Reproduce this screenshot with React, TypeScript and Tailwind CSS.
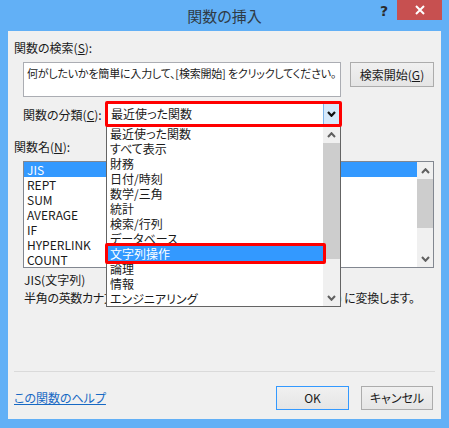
import React from "react";

const FONT = "font-['Noto_Sans_CJK_JP','Noto_Sans',sans-serif] [font-feature-settings:'palt']";

function Chev({ up = false, color = "#606060", w = 9, h = 6, sw = 2 }: { up?: boolean; color?: string; w?: number; h?: number; sw?: number }) {
  return (
    <svg width={w} height={h} viewBox={`0 0 ${w} ${h}`}>
      <path
        d={up ? `M1 ${h - 1} L${w / 2} 1.2 L${w - 1} ${h - 1}` : `M1 1 L${w / 2} ${h - 1.2} L${w - 1} 1`}
        stroke={color}
        strokeWidth={sw}
        fill="none"
      />
    </svg>
  );
}

const funcs = ["JIS", "REPT", "SUM", "AVERAGE", "IF", "HYPERLINK", "COUNT"];
const cats = [
  "最近使った関数",
  "すべて表示",
  "財務",
  "日付/時刻",
  "数学/三角",
  "統計",
  "検索/行列",
  "データベース",
  "文字列操作",
  "論理",
  "情報",
  "エンジニアリング",
];

export default function App() {
  return (
    <div className={`w-[449px] h-[428px] bg-[#62b0f6] flex flex-col ${FONT} text-[12px] text-[#1a1a1a] overflow-hidden`}>
      {/* Title bar */}
      <div className="relative h-[31px] flex items-center justify-center">
        <span className="text-[15px] text-[#2f3a45] mt-[1px]">関数の挿入</span>
        <div className="absolute right-[7px] top-0 flex items-start">
          <span className="mr-[9px] mt-[1px] text-[14px] font-bold text-[#2b2b2b] font-['DejaVu_Sans',sans-serif]">?</span>
          <div className="w-[45px] h-[20px] bg-[#c75050] flex items-center justify-center">
            <svg width="10" height="10" viewBox="0 0 10 10">
              <path d="M1 1 L9 9 M9 1 L1 9" stroke="#ffffff" strokeWidth="2" />
            </svg>
          </div>
        </div>
      </div>

      {/* Client area */}
      <div className="relative mx-[8px] h-[388px] bg-[#f0f0f0] flex flex-col">
        <div className="ml-[6px] mt-[9px] leading-[15px] h-[15px]">
          関数の検索(<span className="underline">S</span>):
        </div>
        <div className="flex mt-[7px]">
          <div className="ml-[15px] w-[318px] h-[35px] bg-white border border-[#abadb3] pl-[3px] pt-[3px] leading-[15px] whitespace-nowrap overflow-hidden text-[11px] tracking-[-0.2px]">
            何がしたいかを簡単に入力して、[検索開始] をクリックしてください。
          </div>
          <div className="ml-[9px] w-[84px] h-[25px] border border-[#acacac] bg-gradient-to-b from-[#f0f0f0] to-[#e5e5e5] flex items-center justify-center">
            検索開始(<span className="underline">G</span>)
          </div>
        </div>

        <div className="flex items-center mt-[4px]">
          <div className="ml-[15px] w-[82px] leading-[15px]">
            関数の分類(<span className="underline">C</span>):
          </div>
          <div className="relative z-10 w-[237px] h-[26px] border-[3px] border-[#ff0000] rounded-[2px] bg-white flex">
            <div className="flex-1 pl-[3px] leading-[20px]">最近使った関数</div>
            <div className="w-[16px] h-full bg-[#d6e9fb] border-l border-[#7eb4ea] flex items-center justify-center">
              <Chev color="#111111" w={9} h={6} sw={2.2} />
            </div>
          </div>
        </div>

        <div className="ml-[6px] mt-[12px] leading-[15px] h-[15px]">
          関数名(<span className="underline">N</span>):
        </div>

        <div className="ml-[15px] mt-[7px] w-[411px] h-[107px] bg-white border border-[#828790] flex">
          <div className="flex-1 flex flex-col">
            {funcs.map((f, i) => (
              <div
                key={f}
                className={`h-[15px] leading-[15px] pl-[3px] ${i === 0 ? "bg-[#3399ff] text-white" : ""}`}
              >
                {f}
              </div>
            ))}
          </div>
          <div className="w-[16px] bg-[#f0f0f0] flex flex-col">
            <div className="h-[17px] flex items-center justify-center">
              <Chev up />
            </div>
            <div className="h-[49px] bg-[#cdcdcd]" />
            <div className="flex-1" />
            <div className="h-[17px] flex items-center justify-center">
              <Chev />
            </div>
          </div>
        </div>

        <div className="ml-[16px] mt-[3px] leading-[18px] h-[18px]">JIS(文字列)</div>
        <div className="ml-[16px] leading-[18px] h-[18px] whitespace-nowrap text-[12px] tracking-[-0.3px]">
          半角の英数カナ文字 (1 バイト) を全角の英数カナ文字 (2 バイト) に変換します。
        </div>

        <div className="mt-auto mx-[6px] h-[1px] bg-[#dadada]" />
        <div className="flex items-center mt-[14px] mb-[9px] h-[24px]">
          <span className="ml-[6px] text-[#1769c4] underline">この関数のヘルプ</span>
          <div className="ml-auto w-[73px] h-[24px] border border-[#3399ff] bg-gradient-to-b from-[#f0f0f0] to-[#e5e5e5] flex items-center justify-center">
            OK
          </div>
          <div className="ml-[12px] mr-[8px] w-[72px] h-[24px] border border-[#acacac] bg-gradient-to-b from-[#f0f0f0] to-[#e5e5e5] flex items-center justify-center">
            キャンセル
          </div>
        </div>

        {/* Dropdown list overlay */}
        <div className="absolute left-[98px] top-[94px] w-[235px] h-[182px] bg-white border border-[#646464] flex">
          <div className="flex-1 flex flex-col">
            {cats.map((c, i) => (
              <div
                key={c}
                className={`h-[15px] leading-[15px] pl-[3px] whitespace-nowrap ${i === 8 ? "bg-[#3399ff] text-white" : ""}`}
              >
                {c}
              </div>
            ))}
          </div>
          <div className="w-[17px] bg-[#f0f0f0] flex flex-col">
            <div className="h-[17px] flex items-center justify-center">
              <Chev up />
            </div>
            <div className="h-[116px] bg-[#cdcdcd]" />
            <div className="flex-1" />
            <div className="h-[17px] flex items-center justify-center">
              <Chev />
            </div>
          </div>
        </div>
        {/* Red annotation box around selected item */}
        <div className="absolute left-[97px] top-[212px] w-[221px] h-[21px] border-[3px] border-[#ff0000] rounded-[2px]" />
      </div>
    </div>
  );
}
